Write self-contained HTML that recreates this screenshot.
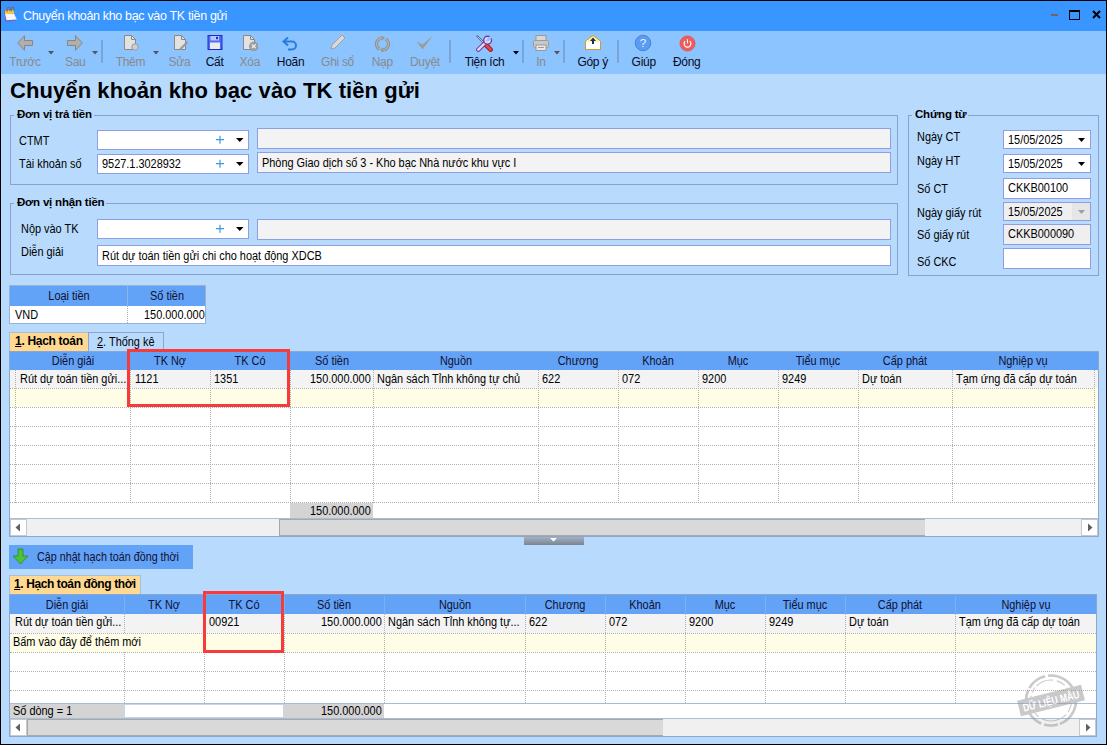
<!DOCTYPE html><html><head><meta charset="utf-8"><style>
html,body{margin:0;padding:0;}
body{width:1107px;height:745px;position:relative;overflow:hidden;background:#000;font-family:"Liberation Sans", sans-serif;}
body div{position:absolute;box-sizing:border-box;}
.t{white-space:nowrap;}
</style></head><body>
<div style="left:1px;top:1px;width:1105px;height:30px;background:#3995ff"></div>
<div style="left:1px;top:31px;width:1105px;height:43px;background:#8cc4ff"></div>
<div style="left:1px;top:74px;width:1105px;height:670px;background:#b8dbfd"></div>
<svg style="position:absolute;left:3px;top:6px" width="15" height="17" viewBox="0 0 15 17">
<path d="M1.2 4 L10 3.4 L13.5 14.5 L2.2 16 Z" fill="#7c5cc4"/>
<path d="M2 8 L11 7.4 L13.8 13.6 L3.5 14.2 Z" fill="#f2f6ff"/>
<path d="M2 4.6 L10.6 4 L11.2 7.6 L2 8.2 Z" fill="#f5cb3c"/>
<path d="M4.2 5.8 V2.6 A1.4 1.4 0 0 1 7 2.6 V5" fill="none" stroke="#6d6d6d" stroke-width="1.1"/>
<path d="M8.2 5.4 V2.4 A1.4 1.4 0 0 1 11 2.4 V4.8" fill="none" stroke="#6d6d6d" stroke-width="1.1"/>
</svg>
<div class="t" style="left:23px;top:7.77px;font-size:12.5px;line-height:16px;color:#fff;font-weight:normal;letter-spacing:-0.33px">Chuyển khoản kho bạc vào TK tiền gửi</div>
<div style="left:1051px;top:14px;width:7px;height:2px;background:#74665a"></div>
<div style="left:1069px;top:10px;width:11px;height:10px;border:1px solid #000;border-top:2px solid #000"></div>
<svg style="position:absolute;left:1092px;top:10px" width="9" height="9" viewBox="0 0 9 9"><path d="M1 1 L8 8 M8 1 L1 8" stroke="#000" stroke-width="2"/></svg>
<svg style="position:absolute;left:17px;top:35px" width="17" height="17" viewBox="0 0 17 17"><path d="M0.7 8 L7.5 0.7 V5.5 H15.5 V10.5 H7.5 V15.3 Z" fill="#afafaf" stroke="#8b8580" stroke-width="1"/></svg>
<div class="t" style="left:-125.0px;width:300px;text-align:center;top:55.14px;font-size:12px;line-height:15px;color:#8a8a8a;font-weight:normal;letter-spacing:-0.3px">Trước</div>
<svg style="position:absolute;left:48px;top:51px" width="6" height="4" viewBox="0 0 6 4"><path d="M0 0 H6 L3 3.5 Z" fill="#555"/></svg>
<svg style="position:absolute;left:67px;top:35px" width="17" height="17" viewBox="0 0 17 17"><path d="M15.3 8 L8.5 0.7 V5.5 H0.5 V10.5 H8.5 V15.3 Z" fill="#afafaf" stroke="#8b8580" stroke-width="1"/></svg>
<div class="t" style="left:-74.85px;width:300px;text-align:center;top:55.14px;font-size:12px;line-height:15px;color:#8a8a8a;font-weight:normal;letter-spacing:-0.3px">Sau</div>
<svg style="position:absolute;left:92px;top:51px" width="6" height="4" viewBox="0 0 6 4"><path d="M0 0 H6 L3 3.5 Z" fill="#555"/></svg>
<div style="left:101px;top:40px;width:2px;height:23px;background:#7aa3d6"></div>
<svg style="position:absolute;left:123px;top:34px" width="16" height="17" viewBox="0 0 16 17"><path d="M1.5 1.5 H8.5 L12.5 5.5 V15.5 H1.5 Z" fill="#e2e2e2" stroke="#8d8884"/><path d="M8.5 1.5 V5.5 H12.5" fill="none" stroke="#8d8884"/><circle cx="12" cy="13" r="3.2" fill="#d0d0d0" stroke="#9a9a9a"/></svg>
<div class="t" style="left:-19.599999999999994px;width:300px;text-align:center;top:55.14px;font-size:12px;line-height:15px;color:#8a8a8a;font-weight:normal;letter-spacing:-0.3px">Thêm</div>
<svg style="position:absolute;left:153px;top:51px" width="6" height="4" viewBox="0 0 6 4"><path d="M0 0 H6 L3 3.5 Z" fill="#555"/></svg>
<svg style="position:absolute;left:173px;top:34px" width="16" height="17" viewBox="0 0 16 17"><path d="M1.5 1.5 H8.5 L12.5 5.5 V15.5 H1.5 Z" fill="#e2e2e2" stroke="#8d8884"/><path d="M8.5 1.5 V5.5 H12.5" fill="none" stroke="#8d8884"/><path d="M7 15.5 L14.5 8" stroke="#9a9a9a" stroke-width="2.2"/></svg>
<div class="t" style="left:29.450000000000017px;width:300px;text-align:center;top:55.14px;font-size:12px;line-height:15px;color:#8a8a8a;font-weight:normal;letter-spacing:-0.3px">Sửa</div>
<svg style="position:absolute;left:207px;top:34px" width="16" height="17" viewBox="0 0 16 17"><rect x="1" y="1.5" width="14" height="14" fill="#4f6cf6" stroke="#1c2cd0"/><rect x="3.5" y="2" width="8.5" height="4.5" fill="#b8c8ff"/><rect x="9" y="2.8" width="2" height="2.4" fill="#1c2cd0"/><rect x="3" y="8.5" width="10" height="6.5" fill="#ececec"/></svg>
<div class="t" style="left:64.65px;width:300px;text-align:center;top:55.14px;font-size:12px;line-height:15px;color:#0a0a20;font-weight:normal;letter-spacing:-0.3px">Cất</div>
<svg style="position:absolute;left:242px;top:34px" width="16" height="17" viewBox="0 0 16 17"><path d="M1.5 1.5 H8.5 L12.5 5.5 V15.5 H1.5 Z" fill="#e2e2e2" stroke="#8d8884"/><path d="M8.5 1.5 V5.5 H12.5" fill="none" stroke="#8d8884"/><circle cx="11.8" cy="12.3" r="4.4" fill="#a0a0a0" stroke="#8a8a8a" stroke-width="0.6"/><path d="M9.9 10.4 L13.7 14.2 M13.7 10.4 L9.9 14.2" stroke="#f4f4f4" stroke-width="1.2"/></svg>
<div class="t" style="left:99.85px;width:300px;text-align:center;top:55.14px;font-size:12px;line-height:15px;color:#8a8a8a;font-weight:normal;letter-spacing:-0.3px">Xóa</div>
<svg style="position:absolute;left:282px;top:36px" width="17" height="15" viewBox="0 0 17 15"><path d="M6 1.5 L1.5 5.5 L6 9.5" fill="none" stroke="#2a7be0" stroke-width="2"/><path d="M2 5.5 H10 A4 4 0 0 1 10 13.5 H6" fill="none" stroke="#2a7be0" stroke-width="2"/></svg>
<div class="t" style="left:140.54999999999995px;width:300px;text-align:center;top:55.14px;font-size:12px;line-height:15px;color:#0a0a20;font-weight:normal;letter-spacing:-0.3px">Hoãn</div>
<svg style="position:absolute;left:329px;top:34px" width="17" height="17" viewBox="0 0 17 17"><path d="M2 15 L3 11 L13 1 L16 4 L6 14 Z" fill="#d9d9d9" stroke="#a0a0a0"/></svg>
<div class="t" style="left:187.54999999999995px;width:300px;text-align:center;top:55.14px;font-size:12px;line-height:15px;color:#8a8a8a;font-weight:normal;letter-spacing:-0.3px">Ghi sổ</div>
<svg style="position:absolute;left:374px;top:36px" width="17" height="16" viewBox="0 0 17 16"><g transform="translate(0.5 0)"><circle cx="8" cy="8" r="6" fill="none" stroke="#8e8e8e" stroke-width="3.2" stroke-dasharray="15.71 3.14" transform="rotate(120 8 8)"/><circle cx="8" cy="8" r="6" fill="none" stroke="#b2b2b2" stroke-width="1.3" stroke-dasharray="15.71 3.14" transform="rotate(120 8 8)"/><path d="M7.4 -0.2 L10.6 2 L7.4 4.4 Z" fill="#999"/><path d="M8.6 16.2 L5.4 14 L8.6 11.6 Z" fill="#999"/></g></svg>
<div class="t" style="left:232.29999999999995px;width:300px;text-align:center;top:55.14px;font-size:12px;line-height:15px;color:#8a8a8a;font-weight:normal;letter-spacing:-0.3px">Nạp</div>
<svg style="position:absolute;left:416px;top:35px" width="18" height="16" viewBox="0 0 18 16"><path d="M0.5 6.5 L6.5 14.5 L17 0.5 L6.5 9.5 Z" fill="#9c9c9c"/></svg>
<div class="t" style="left:274.95px;width:300px;text-align:center;top:55.14px;font-size:12px;line-height:15px;color:#8a8a8a;font-weight:normal;letter-spacing:-0.3px">Duyệt</div>
<div style="left:449px;top:40px;width:2px;height:23px;background:#7aa3d6"></div>
<svg style="position:absolute;left:476px;top:35px" width="17" height="17" viewBox="0 0 17 17"><path d="M1.2 1.2 L7.5 7.5" stroke="#50607a" stroke-width="1.8" stroke-linecap="round"/><path d="M1.5 1.5 L7.5 7.5" stroke="#dfe9ff" stroke-width="0.7"/><path d="M10 10 L14.6 14.6" stroke="#a81c22" stroke-width="4.6" stroke-linecap="round"/><path d="M10 10 L14.6 14.6" stroke="#e04848" stroke-width="2.6" stroke-linecap="round"/><path d="M2.3 14.7 L9.5 7.5" stroke="#6c3c9c" stroke-width="4.4" stroke-linecap="round"/><path d="M2.3 14.7 L9.5 7.5" stroke="#e4d8fa" stroke-width="2.4" stroke-linecap="round"/><circle cx="11.6" cy="5.2" r="3.9" fill="#e4d8fa" stroke="#6c3c9c" stroke-width="1.4"/><path d="M11.8 5 L15.5 1.3" stroke="#8cc4ff" stroke-width="2.6"/><circle cx="11.6" cy="5.2" r="1.2" fill="#8cc4ff"/></svg>
<div class="t" style="left:334.54999999999995px;width:300px;text-align:center;top:55.14px;font-size:12px;line-height:15px;color:#0a0a20;font-weight:normal;letter-spacing:-0.3px">Tiện ích</div>
<svg style="position:absolute;left:513px;top:51px" width="6" height="4" viewBox="0 0 6 4"><path d="M0 0 H6 L3 3.5 Z" fill="#000"/></svg>
<div style="left:522px;top:40px;width:2px;height:23px;background:#7aa3d6"></div>
<svg style="position:absolute;left:532px;top:34px" width="18" height="18" viewBox="0 0 18 18"><rect x="4" y="1.5" width="10" height="5" fill="#d8d8d8" stroke="#9a9a9a"/><rect x="1.5" y="6.5" width="15" height="7" rx="1" fill="#c8c8c8" stroke="#9a9a9a"/><rect x="4" y="11" width="10" height="5.5" fill="#e8e8e8" stroke="#9a9a9a"/><path d="M6 13.5 H12" stroke="#9a9a9a"/></svg>
<div class="t" style="left:391.0px;width:300px;text-align:center;top:55.14px;font-size:12px;line-height:15px;color:#8a8a8a;font-weight:normal;letter-spacing:-0.3px">In</div>
<svg style="position:absolute;left:554px;top:51px" width="6" height="4" viewBox="0 0 6 4"><path d="M0 0 H6 L3 3.5 Z" fill="#555"/></svg>
<div style="left:563px;top:40px;width:2px;height:23px;background:#7aa3d6"></div>
<svg style="position:absolute;left:584px;top:34px" width="18" height="17" viewBox="0 0 18 17"><path d="M1.5 7 L9 1.5 L16.5 7 V15.5 H1.5 Z" fill="#fff3b0" stroke="#c9a030"/><rect x="2" y="8" width="14" height="7" fill="#fff"/><path d="M1.5 7 V15.5 H16.5 V7" fill="none" stroke="#c9a030"/><path d="M9 3.5 L6 7 H8 V10 H10 V7 H12 Z" fill="#1d2e4a"/></svg>
<div class="t" style="left:442.69999999999993px;width:300px;text-align:center;top:55.14px;font-size:12px;line-height:15px;color:#0a0a20;font-weight:normal;letter-spacing:-0.3px">Góp ý</div>
<div style="left:617px;top:40px;width:2px;height:23px;background:#7aa3d6"></div>
<svg style="position:absolute;left:634px;top:34px" width="18" height="18" viewBox="0 0 18 18"><circle cx="9" cy="9" r="7.8" fill="#5a9cf2" stroke="#3c7bd6" stroke-width="0.8"/><text x="9" y="13.2" font-family="Liberation Sans" font-size="11.5" fill="#f4f8ff" text-anchor="middle">?</text></svg>
<div class="t" style="left:493.69999999999993px;width:300px;text-align:center;top:55.14px;font-size:12px;line-height:15px;color:#0a0a20;font-weight:normal;letter-spacing:-0.3px">Giúp</div>
<svg style="position:absolute;left:679px;top:35px" width="17" height="17" viewBox="0 0 17 17"><circle cx="8.5" cy="8.5" r="7.6" fill="#ee5c5c" stroke="#d84a4a" stroke-width="0.6"/><path d="M6.2 6.2 A3.4 3.4 0 1 0 10.8 6.2" fill="none" stroke="#fff" stroke-width="1.1"/><path d="M8.5 4.2 V8.4" stroke="#fff" stroke-width="1.1"/></svg>
<div class="t" style="left:536.65px;width:300px;text-align:center;top:55.14px;font-size:12px;line-height:15px;color:#0a0a20;font-weight:normal;letter-spacing:-0.3px">Đóng</div>
<div class="t" style="left:10px;top:77.38px;font-size:22px;line-height:28px;color:#000;font-weight:bold;letter-spacing:0.08px">Chuyển khoản kho bạc vào TK tiền gửi</div>
<div style="left:10px;top:115px;width:888px;height:70px;border:1px solid #8a9fd2"></div>
<div style="left:14px;top:111px;width:80px;height:8px;background:#b8dbfd"></div>
<div class="t" style="left:17px;top:106.82px;font-size:11.5px;line-height:14px;color:#000;font-weight:bold;letter-spacing:-0.2px">Đơn vị trả tiền</div>
<div class="t" style="left:19px;top:133.34px;font-size:12px;line-height:15px;color:#000;font-weight:normal;transform:scaleX(0.91);transform-origin:0 50%;margin-top:1px">CTMT</div>
<div class="t" style="left:19px;top:156.04px;font-size:12px;line-height:15px;color:#000;font-weight:normal;transform:scaleX(0.91);transform-origin:0 50%;margin-top:1px">Tài khoản số</div>
<div style="left:97px;top:130px;width:152px;height:20px;background:#fff;border:1px solid #8f9ee0"></div>
<svg style="position:absolute;left:216px;top:135px" width="8" height="9" viewBox="0 0 8 9"><path d="M0 4.7 H8 M4 0.7 V8.7" stroke="#3b9ae2" stroke-width="1.2"/></svg>
<svg style="position:absolute;left:236px;top:138px" width="8" height="5" viewBox="0 0 8 5"><path d="M0 0 H7.5 L3.75 4 Z" fill="#000"/></svg>
<div style="left:97px;top:154px;width:152px;height:20px;background:#fff;border:1px solid #8f9ee0"></div>
<div class="t" style="left:102px;top:156.04px;font-size:12px;line-height:15px;color:#000;font-weight:normal;transform:scaleX(0.91);transform-origin:0 50%;margin-top:1px">9527.1.3028932</div>
<svg style="position:absolute;left:216px;top:159px" width="8" height="9" viewBox="0 0 8 9"><path d="M0 4.7 H8 M4 0.7 V8.7" stroke="#3b9ae2" stroke-width="1.2"/></svg>
<svg style="position:absolute;left:236px;top:162px" width="8" height="5" viewBox="0 0 8 5"><path d="M0 0 H7.5 L3.75 4 Z" fill="#000"/></svg>
<div style="left:257px;top:128px;width:634px;height:21px;background:#f3f3f3;border:1px solid #8f9ee0"></div>
<div style="left:257px;top:152px;width:634px;height:21px;background:#f3f3f3;border:1px solid #8f9ee0"></div>
<div class="t" style="left:262px;top:155.04px;font-size:12px;line-height:15px;color:#000;font-weight:normal;transform:scaleX(0.91);transform-origin:0 50%;margin-top:1px">Phòng Giao dịch số 3 - Kho bạc Nhà nước khu vực I</div>
<div style="left:10px;top:203px;width:888px;height:72px;border:1px solid #8a9fd2"></div>
<div style="left:14px;top:199px;width:92px;height:8px;background:#b8dbfd"></div>
<div class="t" style="left:17px;top:194.82px;font-size:11.5px;line-height:14px;color:#000;font-weight:bold;letter-spacing:-0.2px">Đơn vị nhận tiền</div>
<div class="t" style="left:21px;top:221.34px;font-size:12px;line-height:15px;color:#000;font-weight:normal;transform:scaleX(0.91);transform-origin:0 50%;margin-top:1px">Nộp vào TK</div>
<div class="t" style="left:21px;top:244.14px;font-size:12px;line-height:15px;color:#000;font-weight:normal;transform:scaleX(0.91);transform-origin:0 50%;margin-top:1px">Diễn giải</div>
<div style="left:97px;top:219px;width:152px;height:20px;background:#fff;border:1px solid #8f9ee0"></div>
<svg style="position:absolute;left:216px;top:224px" width="8" height="9" viewBox="0 0 8 9"><path d="M0 4.7 H8 M4 0.7 V8.7" stroke="#3b9ae2" stroke-width="1.2"/></svg>
<svg style="position:absolute;left:236px;top:227px" width="8" height="5" viewBox="0 0 8 5"><path d="M0 0 H7.5 L3.75 4 Z" fill="#000"/></svg>
<div style="left:257px;top:219px;width:634px;height:21px;background:#f3f3f3;border:1px solid #8f9ee0"></div>
<div style="left:97px;top:245px;width:794px;height:21px;background:#fff;border:1px solid #8f9ee0"></div>
<div class="t" style="left:102px;top:248.24px;font-size:12px;line-height:15px;color:#000;font-weight:normal;transform:scaleX(0.91);transform-origin:0 50%;margin-top:1px">Rút dự toán tiền gửi chi cho hoạt động XDCB</div>
<div style="left:908px;top:115px;width:191px;height:161px;border:1px solid #8a9fd2"></div>
<div style="left:912px;top:111px;width:56px;height:8px;background:#b8dbfd"></div>
<div class="t" style="left:915px;top:106.82px;font-size:11.5px;line-height:14px;color:#000;font-weight:bold;letter-spacing:-0.2px">Chứng từ</div>
<div class="t" style="left:917px;top:129.14px;font-size:12px;line-height:15px;color:#000;font-weight:normal;transform:scaleX(0.91);transform-origin:0 50%;margin-top:1px">Ngày CT</div>
<div class="t" style="left:917px;top:153.34px;font-size:12px;line-height:15px;color:#000;font-weight:normal;transform:scaleX(0.91);transform-origin:0 50%;margin-top:1px">Ngày HT</div>
<div class="t" style="left:917px;top:181.34px;font-size:12px;line-height:15px;color:#000;font-weight:normal;transform:scaleX(0.91);transform-origin:0 50%;margin-top:1px">Số CT</div>
<div class="t" style="left:917px;top:205.04px;font-size:12px;line-height:15px;color:#000;font-weight:normal;transform:scaleX(0.91);transform-origin:0 50%;margin-top:1px">Ngày giấy rút</div>
<div class="t" style="left:917px;top:227.34px;font-size:12px;line-height:15px;color:#000;font-weight:normal;transform:scaleX(0.91);transform-origin:0 50%;margin-top:1px">Số giấy rút</div>
<div class="t" style="left:917px;top:254.04px;font-size:12px;line-height:15px;color:#000;font-weight:normal;transform:scaleX(0.91);transform-origin:0 50%;margin-top:1px">Số CKC</div>
<div style="left:1003px;top:130px;width:88px;height:19px;background:#fff;border:1px solid #8f9ee0"></div>
<div class="t" style="left:1008px;top:131.84px;font-size:12px;line-height:15px;color:#000;font-weight:normal;transform:scaleX(0.91);transform-origin:0 50%;margin-top:1px">15/05/2025</div>
<svg style="position:absolute;left:1078px;top:138px" width="8" height="5" viewBox="0 0 8 5"><path d="M0 0 H7 L3.5 4 Z" fill="#000"/></svg>
<div style="left:1003px;top:154px;width:88px;height:19px;background:#fff;border:1px solid #8f9ee0"></div>
<div class="t" style="left:1008px;top:155.84px;font-size:12px;line-height:15px;color:#000;font-weight:normal;transform:scaleX(0.91);transform-origin:0 50%;margin-top:1px">15/05/2025</div>
<svg style="position:absolute;left:1078px;top:162px" width="8" height="5" viewBox="0 0 8 5"><path d="M0 0 H7 L3.5 4 Z" fill="#000"/></svg>
<div style="left:1003px;top:178px;width:88px;height:21px;background:#fff;border:1px solid #8f9ee0"></div>
<div class="t" style="left:1008px;top:179.84px;font-size:12px;line-height:15px;color:#000;font-weight:normal;transform:scaleX(0.91);transform-origin:0 50%;margin-top:1px">CKKB00100</div>
<div style="left:1003px;top:202px;width:88px;height:19px;background:#efefef;border:1px solid #8f9ee0"></div>
<div class="t" style="left:1008px;top:203.84px;font-size:12px;line-height:15px;color:#000;font-weight:normal;transform:scaleX(0.91);transform-origin:0 50%;margin-top:1px">15/05/2025</div>
<svg style="position:absolute;left:1078px;top:210px" width="8" height="5" viewBox="0 0 8 5"><path d="M0 0 H7 L3.5 4 Z" fill="#a0a0a0"/></svg>
<div style="left:1072px;top:203px;width:18px;height:17px;background:#e6e6e6"></div>
<svg style="position:absolute;left:1078px;top:210px" width="8" height="5" viewBox="0 0 8 5"><path d="M0 0 H7 L3.5 4 Z" fill="#a0a0a0"/></svg>
<div style="left:1003px;top:224px;width:88px;height:21px;background:#efefef;border:1px solid #8f9ee0"></div>
<div class="t" style="left:1008px;top:225.84px;font-size:12px;line-height:15px;color:#000;font-weight:normal;transform:scaleX(0.91);transform-origin:0 50%;margin-top:1px">CKKB000090</div>
<div style="left:1003px;top:248px;width:88px;height:21px;background:#fff;border:1px solid #8f9ee0"></div>
<div style="left:9px;top:285px;width:197px;height:39px;background:#fff;border:1px solid #9ab0d8"></div>
<div style="left:10px;top:286px;width:195px;height:20px;background:#62a2f7"></div>
<div style="left:127px;top:286px;width:1px;height:20px;background:#8fb4e8"></div>
<div style="left:127px;top:306px;width:1px;height:17px;border-left:1px dotted #aaa"></div>
<div class="t" style="left:-81px;width:300px;text-align:center;top:288.34px;font-size:12px;line-height:15px;color:#101030;font-weight:normal;transform:scaleX(0.91);transform-origin:50% 50%;margin-top:1px">Loại tiền</div>
<div class="t" style="left:17px;width:300px;text-align:center;top:288.34px;font-size:12px;line-height:15px;color:#101030;font-weight:normal;transform:scaleX(0.91);transform-origin:50% 50%;margin-top:1px">Số tiền</div>
<div class="t" style="left:15px;top:306.84px;font-size:12px;line-height:15px;color:#000;font-weight:normal;transform:scaleX(0.91);transform-origin:0 50%;margin-top:1px">VND</div>
<div class="t" style="right:902px;top:306.84px;font-size:12px;line-height:15px;color:#000;font-weight:normal;text-align:right;transform:scaleX(0.91);transform-origin:100% 50%;margin-top:1px">150.000.000</div>
<div style="left:9px;top:332px;width:80px;height:21px;background:#ffd992;border:1px solid #a9bfd9;border-bottom:none"></div>
<div style="left:88px;top:332px;width:76px;height:20px;background:#b8dbfd;border:1px solid #8da6c8;border-bottom:none"></div>
<div class="t" style="left:15px;top:333.84px;font-size:12px;line-height:15px;color:#000;font-weight:bold;letter-spacing:-0.3px"><u>1</u>. Hạch toán</div>
<div class="t" style="left:97px;top:333.84px;font-size:12px;line-height:15px;color:#000;font-weight:normal;transform:scaleX(0.91);transform-origin:0 50%;margin-top:1px"><u>2</u>. Thống kê</div>
<div style="left:9px;top:351px;width:1090px;height:186px;background:#fff;border:1px solid #8fa6cc"></div>
<div style="left:10px;top:352px;width:1088px;height:18px;background:#62a2f7"></div>
<div style="left:10px;top:370px;width:1088px;height:18px;background:#f3f3f3"></div>
<div style="left:10px;top:389px;width:1088px;height:18px;background:#fffde6"></div>
<div style="left:10px;top:388px;width:1085px;height:1px;border-top:1px dotted #b0b0b0"></div>
<div style="left:10px;top:407px;width:1085px;height:1px;border-top:1px dotted #b0b0b0"></div>
<div style="left:10px;top:426px;width:1085px;height:1px;border-top:1px dotted #b0b0b0"></div>
<div style="left:10px;top:445px;width:1085px;height:1px;border-top:1px dotted #b0b0b0"></div>
<div style="left:10px;top:464px;width:1085px;height:1px;border-top:1px dotted #b0b0b0"></div>
<div style="left:10px;top:483px;width:1085px;height:1px;border-top:1px dotted #b0b0b0"></div>
<div style="left:10px;top:502px;width:1085px;height:1px;border-top:1px dotted #b0b0b0"></div>
<div style="left:15px;top:370px;width:1px;height:133px;border-left:1px dotted #b0b0b0"></div>
<div style="left:130px;top:370px;width:1px;height:133px;border-left:1px dotted #b0b0b0"></div>
<div style="left:210px;top:370px;width:1px;height:133px;border-left:1px dotted #b0b0b0"></div>
<div style="left:290px;top:370px;width:1px;height:133px;border-left:1px dotted #b0b0b0"></div>
<div style="left:373px;top:370px;width:1px;height:133px;border-left:1px dotted #b0b0b0"></div>
<div style="left:538px;top:370px;width:1px;height:133px;border-left:1px dotted #b0b0b0"></div>
<div style="left:618px;top:370px;width:1px;height:133px;border-left:1px dotted #b0b0b0"></div>
<div style="left:698px;top:370px;width:1px;height:133px;border-left:1px dotted #b0b0b0"></div>
<div style="left:778px;top:370px;width:1px;height:133px;border-left:1px dotted #b0b0b0"></div>
<div style="left:858px;top:370px;width:1px;height:133px;border-left:1px dotted #b0b0b0"></div>
<div style="left:952px;top:370px;width:1px;height:133px;border-left:1px dotted #b0b0b0"></div>
<div style="left:1094px;top:370px;width:1px;height:133px;border-left:1px dotted #b0b0b0"></div>
<div class="t" style="left:-77.5px;width:300px;text-align:center;top:353.04px;font-size:12px;line-height:15px;color:#101030;font-weight:normal;transform:scaleX(0.91);transform-origin:50% 50%;margin-top:1px">Diễn giải</div>
<div class="t" style="left:20.0px;width:300px;text-align:center;top:353.04px;font-size:12px;line-height:15px;color:#101030;font-weight:normal;transform:scaleX(0.91);transform-origin:50% 50%;margin-top:1px">TK Nợ</div>
<div class="t" style="left:100.0px;width:300px;text-align:center;top:353.04px;font-size:12px;line-height:15px;color:#101030;font-weight:normal;transform:scaleX(0.91);transform-origin:50% 50%;margin-top:1px">TK Có</div>
<div class="t" style="left:181.5px;width:300px;text-align:center;top:353.04px;font-size:12px;line-height:15px;color:#101030;font-weight:normal;transform:scaleX(0.91);transform-origin:50% 50%;margin-top:1px">Số tiền</div>
<div class="t" style="left:305.5px;width:300px;text-align:center;top:353.04px;font-size:12px;line-height:15px;color:#101030;font-weight:normal;transform:scaleX(0.91);transform-origin:50% 50%;margin-top:1px">Nguồn</div>
<div class="t" style="left:428.0px;width:300px;text-align:center;top:353.04px;font-size:12px;line-height:15px;color:#101030;font-weight:normal;transform:scaleX(0.91);transform-origin:50% 50%;margin-top:1px">Chương</div>
<div class="t" style="left:508.0px;width:300px;text-align:center;top:353.04px;font-size:12px;line-height:15px;color:#101030;font-weight:normal;transform:scaleX(0.91);transform-origin:50% 50%;margin-top:1px">Khoản</div>
<div class="t" style="left:588.0px;width:300px;text-align:center;top:353.04px;font-size:12px;line-height:15px;color:#101030;font-weight:normal;transform:scaleX(0.91);transform-origin:50% 50%;margin-top:1px">Mục</div>
<div class="t" style="left:668.0px;width:300px;text-align:center;top:353.04px;font-size:12px;line-height:15px;color:#101030;font-weight:normal;transform:scaleX(0.91);transform-origin:50% 50%;margin-top:1px">Tiểu mục</div>
<div class="t" style="left:755.0px;width:300px;text-align:center;top:353.04px;font-size:12px;line-height:15px;color:#101030;font-weight:normal;transform:scaleX(0.91);transform-origin:50% 50%;margin-top:1px">Cấp phát</div>
<div class="t" style="left:873.0px;width:300px;text-align:center;top:353.04px;font-size:12px;line-height:15px;color:#101030;font-weight:normal;transform:scaleX(0.91);transform-origin:50% 50%;margin-top:1px">Nghiệp vụ</div>
<div class="t" style="left:20px;top:371.04px;font-size:12px;line-height:15px;color:#000;font-weight:normal;transform:scaleX(0.91);transform-origin:0 50%;margin-top:1px">Rút dự toán tiền gửi...</div>
<div class="t" style="left:135px;top:371.04px;font-size:12px;line-height:15px;color:#000;font-weight:normal;transform:scaleX(0.91);transform-origin:0 50%;margin-top:1px">1121</div>
<div class="t" style="left:214px;top:371.04px;font-size:12px;line-height:15px;color:#000;font-weight:normal;transform:scaleX(0.91);transform-origin:0 50%;margin-top:1px">1351</div>
<div class="t" style="right:736px;top:371.04px;font-size:12px;line-height:15px;color:#000;font-weight:normal;text-align:right;transform:scaleX(0.91);transform-origin:100% 50%;margin-top:1px">150.000.000</div>
<div class="t" style="left:377px;top:371.04px;font-size:12px;line-height:15px;color:#000;font-weight:normal;transform:scaleX(0.91);transform-origin:0 50%;margin-top:1px">Ngân sách Tỉnh không tự chủ</div>
<div class="t" style="left:542px;top:371.04px;font-size:12px;line-height:15px;color:#000;font-weight:normal;transform:scaleX(0.91);transform-origin:0 50%;margin-top:1px">622</div>
<div class="t" style="left:622px;top:371.04px;font-size:12px;line-height:15px;color:#000;font-weight:normal;transform:scaleX(0.91);transform-origin:0 50%;margin-top:1px">072</div>
<div class="t" style="left:702px;top:371.04px;font-size:12px;line-height:15px;color:#000;font-weight:normal;transform:scaleX(0.91);transform-origin:0 50%;margin-top:1px">9200</div>
<div class="t" style="left:782px;top:371.04px;font-size:12px;line-height:15px;color:#000;font-weight:normal;transform:scaleX(0.91);transform-origin:0 50%;margin-top:1px">9249</div>
<div class="t" style="left:862px;top:371.04px;font-size:12px;line-height:15px;color:#000;font-weight:normal;transform:scaleX(0.91);transform-origin:0 50%;margin-top:1px">Dự toán</div>
<div class="t" style="left:956px;top:371.04px;font-size:12px;line-height:15px;color:#000;font-weight:normal;transform:scaleX(0.91);transform-origin:0 50%;margin-top:1px">Tạm ứng đã cấp dự toán</div>
<div style="left:10px;top:518px;width:1088px;height:1px;background:#a9bcd8"></div>
<div style="left:290px;top:503px;width:83px;height:15px;background:#d4d4d4"></div>
<div class="t" style="right:736px;top:502.84px;font-size:12px;line-height:15px;color:#000;font-weight:normal;text-align:right;transform:scaleX(0.91);transform-origin:100% 50%;margin-top:1px">150.000.000</div>
<div style="left:10px;top:519px;width:1088px;height:17px;background:#f0f0f0"></div>
<div style="left:10px;top:519px;width:17px;height:17px;background:#fff;border:1px solid #c8c8c8"></div>
<svg style="position:absolute;left:15px;top:523px" width="6" height="9" viewBox="0 0 6 9"><path d="M5 0.5 V8.5 L0.5 4.5 Z" fill="#606060"/></svg>
<div style="left:279px;top:519px;width:646px;height:17px;background:#d9d9d9;border:1px solid #a8a8a8;border-right:none"></div>
<div style="left:1081px;top:519px;width:17px;height:17px;background:#fff;border:1px solid #c8c8c8"></div>
<svg style="position:absolute;left:1087px;top:523px" width="6" height="9" viewBox="0 0 6 9"><path d="M1 0.5 V8.5 L5.5 4.5 Z" fill="#606060"/></svg>
<div style="left:127px;top:349px;width:163px;height:58px;border:3px solid #f73b3b"></div>
<div style="left:524px;top:537px;width:60px;height:8px;background:linear-gradient(#a3b0c2,#7b838f)"></div>
<svg style="position:absolute;left:550px;top:538px" width="7" height="4" viewBox="0 0 7 4"><path d="M0 0 H7 L3.5 3.5 Z" fill="#fff"/></svg>
<div style="left:9px;top:545px;width:184px;height:24px;background:#62a2f7"></div>
<svg style="position:absolute;left:12px;top:548px" width="18" height="17" viewBox="0 0 18 17"><path d="M6 1 H11 V8 H16 L8.5 16 L1 8 H6 Z" fill="#4cc23a" stroke="#2e8a1e" stroke-width="0.8"/></svg>
<div class="t" style="left:37px;top:549.04px;font-size:12px;line-height:15px;color:#101030;font-weight:normal;transform:scaleX(0.895);transform-origin:0 50%;margin-top:1px">Cập nhật hạch toán đồng thời</div>
<div style="left:9px;top:575px;width:132px;height:20px;background:#ffd992;border:1px solid #a9bfd9;border-bottom:none"></div>
<div class="t" style="left:14px;top:576.84px;font-size:12px;line-height:15px;color:#000;font-weight:bold;letter-spacing:-0.4px"><u>1</u>. Hạch toán đồng thời</div>
<div style="left:9px;top:594px;width:1088px;height:143px;background:#fff;border:1px solid #8fa6cc"></div>
<div style="left:10px;top:595px;width:1086px;height:19px;background:#62a2f7"></div>
<div style="left:124px;top:596px;width:1px;height:18px;background:#7db2f2"></div>
<div style="left:204px;top:596px;width:1px;height:18px;background:#7db2f2"></div>
<div style="left:284px;top:596px;width:1px;height:18px;background:#7db2f2"></div>
<div style="left:384px;top:596px;width:1px;height:18px;background:#7db2f2"></div>
<div style="left:525px;top:596px;width:1px;height:18px;background:#7db2f2"></div>
<div style="left:605px;top:596px;width:1px;height:18px;background:#7db2f2"></div>
<div style="left:685px;top:596px;width:1px;height:18px;background:#7db2f2"></div>
<div style="left:765px;top:596px;width:1px;height:18px;background:#7db2f2"></div>
<div style="left:845px;top:596px;width:1px;height:18px;background:#7db2f2"></div>
<div style="left:955px;top:596px;width:1px;height:18px;background:#7db2f2"></div>
<div style="left:10px;top:614px;width:1086px;height:19px;background:#f3f3f3"></div>
<div style="left:10px;top:634px;width:1086px;height:18px;background:#fffde6"></div>
<div style="left:10px;top:633px;width:1086px;height:1px;border-top:1px dotted #b0b0b0"></div>
<div style="left:10px;top:652px;width:1086px;height:1px;border-top:1px dotted #b0b0b0"></div>
<div style="left:10px;top:671px;width:1086px;height:1px;border-top:1px dotted #b0b0b0"></div>
<div style="left:10px;top:690px;width:1086px;height:1px;border-top:1px dotted #b0b0b0"></div>
<div style="left:124px;top:614px;width:1px;height:89px;border-left:1px dotted #b0b0b0"></div>
<div style="left:204px;top:614px;width:1px;height:89px;border-left:1px dotted #b0b0b0"></div>
<div style="left:284px;top:614px;width:1px;height:89px;border-left:1px dotted #b0b0b0"></div>
<div style="left:384px;top:614px;width:1px;height:89px;border-left:1px dotted #b0b0b0"></div>
<div style="left:525px;top:614px;width:1px;height:89px;border-left:1px dotted #b0b0b0"></div>
<div style="left:605px;top:614px;width:1px;height:89px;border-left:1px dotted #b0b0b0"></div>
<div style="left:685px;top:614px;width:1px;height:89px;border-left:1px dotted #b0b0b0"></div>
<div style="left:765px;top:614px;width:1px;height:89px;border-left:1px dotted #b0b0b0"></div>
<div style="left:845px;top:614px;width:1px;height:89px;border-left:1px dotted #b0b0b0"></div>
<div style="left:955px;top:614px;width:1px;height:89px;border-left:1px dotted #b0b0b0"></div>
<div class="t" style="left:-83.0px;width:300px;text-align:center;top:596.94px;font-size:12px;line-height:15px;color:#101030;font-weight:normal;transform:scaleX(0.91);transform-origin:50% 50%;margin-top:1px">Diễn giải</div>
<div class="t" style="left:14.0px;width:300px;text-align:center;top:596.94px;font-size:12px;line-height:15px;color:#101030;font-weight:normal;transform:scaleX(0.91);transform-origin:50% 50%;margin-top:1px">TK Nợ</div>
<div class="t" style="left:94.0px;width:300px;text-align:center;top:596.94px;font-size:12px;line-height:15px;color:#101030;font-weight:normal;transform:scaleX(0.91);transform-origin:50% 50%;margin-top:1px">TK Có</div>
<div class="t" style="left:184.0px;width:300px;text-align:center;top:596.94px;font-size:12px;line-height:15px;color:#101030;font-weight:normal;transform:scaleX(0.91);transform-origin:50% 50%;margin-top:1px">Số tiền</div>
<div class="t" style="left:304.5px;width:300px;text-align:center;top:596.94px;font-size:12px;line-height:15px;color:#101030;font-weight:normal;transform:scaleX(0.91);transform-origin:50% 50%;margin-top:1px">Nguồn</div>
<div class="t" style="left:415.0px;width:300px;text-align:center;top:596.94px;font-size:12px;line-height:15px;color:#101030;font-weight:normal;transform:scaleX(0.91);transform-origin:50% 50%;margin-top:1px">Chương</div>
<div class="t" style="left:495.0px;width:300px;text-align:center;top:596.94px;font-size:12px;line-height:15px;color:#101030;font-weight:normal;transform:scaleX(0.91);transform-origin:50% 50%;margin-top:1px">Khoản</div>
<div class="t" style="left:575.0px;width:300px;text-align:center;top:596.94px;font-size:12px;line-height:15px;color:#101030;font-weight:normal;transform:scaleX(0.91);transform-origin:50% 50%;margin-top:1px">Mục</div>
<div class="t" style="left:655.0px;width:300px;text-align:center;top:596.94px;font-size:12px;line-height:15px;color:#101030;font-weight:normal;transform:scaleX(0.91);transform-origin:50% 50%;margin-top:1px">Tiểu mục</div>
<div class="t" style="left:750.0px;width:300px;text-align:center;top:596.94px;font-size:12px;line-height:15px;color:#101030;font-weight:normal;transform:scaleX(0.91);transform-origin:50% 50%;margin-top:1px">Cấp phát</div>
<div class="t" style="left:875.5px;width:300px;text-align:center;top:596.94px;font-size:12px;line-height:15px;color:#101030;font-weight:normal;transform:scaleX(0.91);transform-origin:50% 50%;margin-top:1px">Nghiệp vụ</div>
<div class="t" style="left:15px;top:614.24px;font-size:12px;line-height:15px;color:#000;font-weight:normal;transform:scaleX(0.91);transform-origin:0 50%;margin-top:1px">Rút dự toán tiền gửi...</div>
<div class="t" style="left:209px;top:614.24px;font-size:12px;line-height:15px;color:#000;font-weight:normal;transform:scaleX(0.91);transform-origin:0 50%;margin-top:1px">00921</div>
<div class="t" style="right:725px;top:614.24px;font-size:12px;line-height:15px;color:#000;font-weight:normal;text-align:right;transform:scaleX(0.91);transform-origin:100% 50%;margin-top:1px">150.000.000</div>
<div class="t" style="left:388px;top:614.24px;font-size:12px;line-height:15px;color:#000;font-weight:normal;transform:scaleX(0.91);transform-origin:0 50%;margin-top:1px">Ngân sách Tỉnh không tự...</div>
<div class="t" style="left:529px;top:614.24px;font-size:12px;line-height:15px;color:#000;font-weight:normal;transform:scaleX(0.91);transform-origin:0 50%;margin-top:1px">622</div>
<div class="t" style="left:609px;top:614.24px;font-size:12px;line-height:15px;color:#000;font-weight:normal;transform:scaleX(0.91);transform-origin:0 50%;margin-top:1px">072</div>
<div class="t" style="left:689px;top:614.24px;font-size:12px;line-height:15px;color:#000;font-weight:normal;transform:scaleX(0.91);transform-origin:0 50%;margin-top:1px">9200</div>
<div class="t" style="left:769px;top:614.24px;font-size:12px;line-height:15px;color:#000;font-weight:normal;transform:scaleX(0.91);transform-origin:0 50%;margin-top:1px">9249</div>
<div class="t" style="left:849px;top:614.24px;font-size:12px;line-height:15px;color:#000;font-weight:normal;transform:scaleX(0.91);transform-origin:0 50%;margin-top:1px">Dự toán</div>
<div class="t" style="left:959px;top:614.24px;font-size:12px;line-height:15px;color:#000;font-weight:normal;transform:scaleX(0.91);transform-origin:0 50%;margin-top:1px">Tạm ứng đã cấp dự toán</div>
<div style="left:11px;top:634px;width:135px;height:18px;background:#fffde6"></div>
<div class="t" style="left:13px;top:634.34px;font-size:12px;line-height:15px;color:#000;font-weight:normal;transform:scaleX(0.91);transform-origin:0 50%;margin-top:1px">Bấm vào đây để thêm mới</div>
<div style="left:10px;top:703px;width:1086px;height:1px;background:#a9bcd8"></div>
<div style="left:10px;top:704px;width:114px;height:14px;background:#d4d4d4"></div>
<div style="left:124px;top:704px;width:160px;height:14px;background:#fff;border:1px solid #c5d6ea"></div>
<div style="left:284px;top:704px;width:100px;height:14px;background:#d4d4d4"></div>
<div class="t" style="left:13px;top:703.34px;font-size:12px;line-height:15px;color:#000;font-weight:normal;transform:scaleX(0.91);transform-origin:0 50%;margin-top:1px">Số dòng = 1</div>
<div class="t" style="right:725px;top:703.34px;font-size:12px;line-height:15px;color:#000;font-weight:normal;text-align:right;transform:scaleX(0.91);transform-origin:100% 50%;margin-top:1px">150.000.000</div>
<div style="left:10px;top:718px;width:1086px;height:1px;background:#a9bcd8"></div>
<div style="left:10px;top:719px;width:1086px;height:17px;background:#f0f0f0"></div>
<div style="left:10px;top:719px;width:17px;height:17px;background:#fff;border:1px solid #c8c8c8"></div>
<svg style="position:absolute;left:15px;top:723px" width="6" height="9" viewBox="0 0 6 9"><path d="M5 0.5 V8.5 L0.5 4.5 Z" fill="#606060"/></svg>
<div style="left:27px;top:719px;width:636px;height:17px;background:#d9d9d9;border:1px solid #a8a8a8;border-right:none"></div>
<div style="left:1079px;top:719px;width:17px;height:17px;background:#fff;border:1px solid #c8c8c8"></div>
<svg style="position:absolute;left:1085px;top:723px" width="6" height="9" viewBox="0 0 6 9"><path d="M1 0.5 V8.5 L5.5 4.5 Z" fill="#606060"/></svg>
<div style="left:203px;top:591px;width:81px;height:62px;border:3px solid #f73b3b"></div>
<svg style="position:absolute;left:1016px;top:666px" width="72" height="70" viewBox="0 0 72 70"><g opacity="0.5">
<g transform="translate(35 34.5)">
<circle cx="0" cy="0" r="25" fill="none" stroke="#959595" stroke-width="2.6" stroke-dasharray="30 2 14 3 40 2 20 3"/>
<circle cx="0" cy="0" r="20.5" fill="none" stroke="#959595" stroke-width="1.1" stroke-dasharray="12 3 6 2 18 4 9 3"/>
<g transform="rotate(-14)">
<rect x="-33" y="-8" width="66" height="16" fill="#959595"/>
<text x="-29" y="4.4" font-family="Liberation Sans" font-size="11" font-weight="bold" fill="#fff" textLength="58" lengthAdjust="spacingAndGlyphs">DỮ LIỆU MẪU</text>
</g></g></g></svg>
</body></html>
